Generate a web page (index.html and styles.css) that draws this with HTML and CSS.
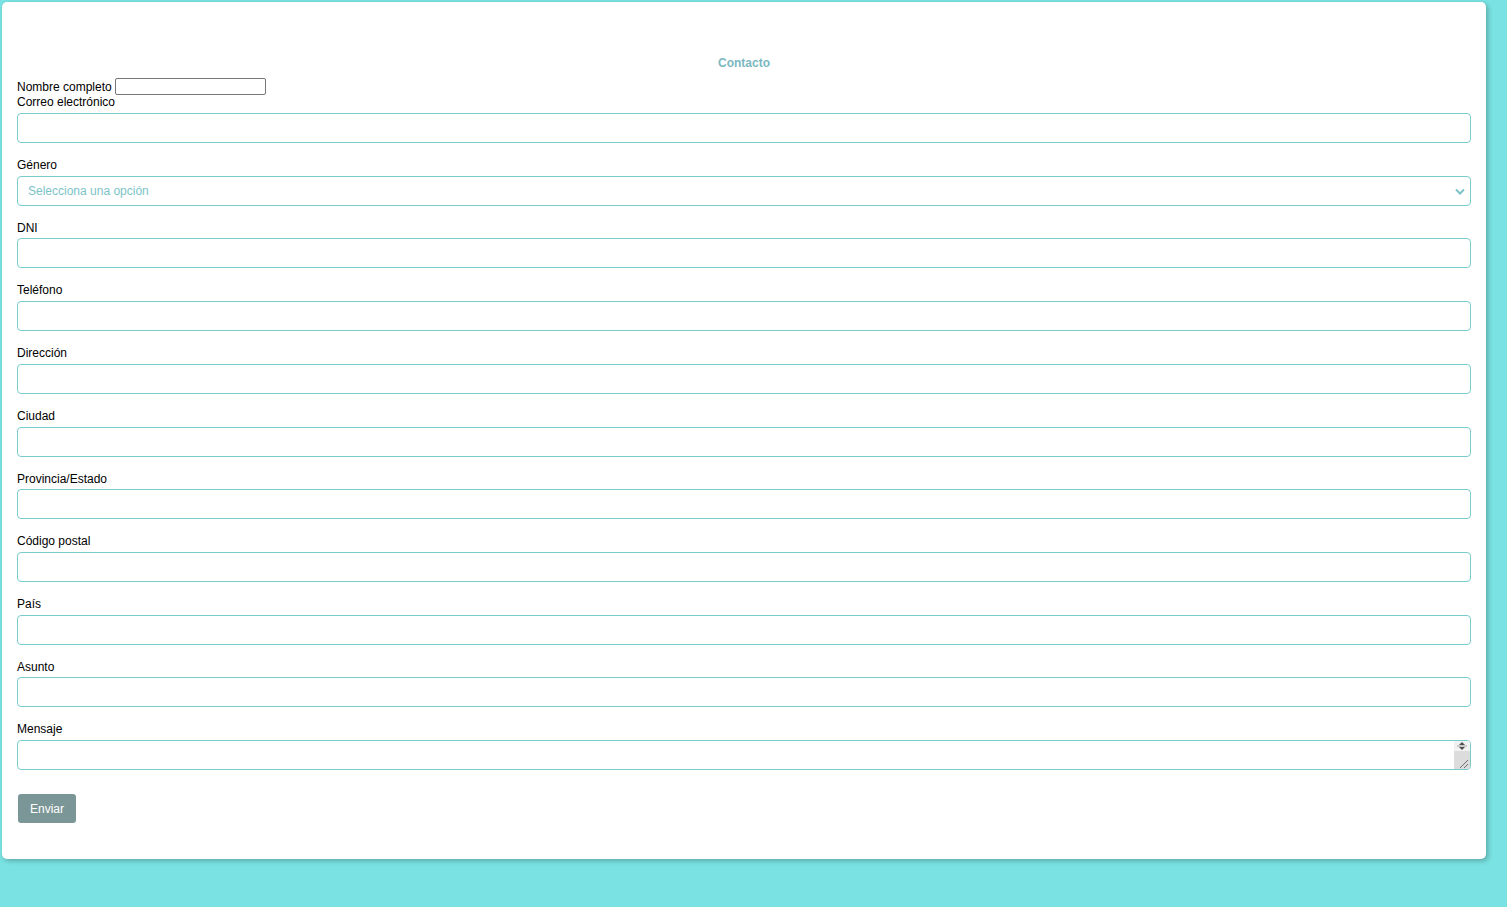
FILE: index.html
```html
<!DOCTYPE html>
<html lang="es">
<head>
<meta charset="utf-8">
<title>Contacto</title>
<link rel="stylesheet" href="styles.css">
</head>
<body>
<div class="card">
  <h2 class="title">Contacto</h2>
  <form class="form">
    <div class="inline-row">
      <label class="label-inline" for="nombre">Nombre completo</label>
      <input class="plain-input" id="nombre" type="text">
    </div>
    <label class="label first" for="correo">Correo electrónico</label>
    <input class="field" id="correo" type="email">

    <label class="label" for="genero">Género</label>
    <div class="select-wrap">
      <select class="field select" id="genero">
        <option>Selecciona una opción</option>
      </select>
      <svg class="chevron" width="10" height="7" viewBox="0 0 10 7"><path d="M1 1.5 L5 5.5 L9 1.5" fill="none" stroke="#7cc3c8" stroke-width="2"/></svg>
    </div>

    <label class="label" for="dni">DNI</label>
    <input class="field" id="dni" type="text">

    <label class="label" for="tel">Teléfono</label>
    <input class="field" id="tel" type="tel">

    <label class="label" for="dir">Dirección</label>
    <input class="field" id="dir" type="text">

    <label class="label" for="ciudad">Ciudad</label>
    <input class="field" id="ciudad" type="text">

    <label class="label" for="prov">Provincia/Estado</label>
    <input class="field" id="prov" type="text">

    <label class="label" for="cp">Código postal</label>
    <input class="field" id="cp" type="text">

    <label class="label" for="pais">País</label>
    <input class="field" id="pais" type="text">

    <label class="label" for="asunto">Asunto</label>
    <input class="field" id="asunto" type="text">

    <label class="label" for="msg">Mensaje</label>
    <div class="textarea-wrap">
      <textarea class="field textarea" id="msg"></textarea>
      <div class="scrollbar">
        <div class="scroll-arrows">
          <svg width="16" height="10" viewBox="0 0 16 10"><path d="M8 1 L11 4 L5 4 Z" fill="#505050"/><path d="M3 5 H13" stroke="#a0a0a0" stroke-width="1"/><path d="M8 9 L11 6 L5 6 Z" fill="#505050"/></svg>
        </div>
        <div class="scroll-grip">
          <svg width="16" height="18" viewBox="0 0 16 18"><path d="M14 9 L6 17 M14 13 L10 17" stroke="#6e6e6e" stroke-width="1"/></svg>
        </div>
      </div>
    </div>

    <button class="submit" type="button">Enviar</button>
  </form>
</div>
</body>
</html>
```

FILE: styles.css
```css
html, body {
  margin: 0;
  padding: 0;
}
body {
  background: #7ae2e2;
  font-family: "Liberation Sans", Arial, sans-serif;
  font-size: 12px;
  color: #000;
  min-height: 907px;
  padding-top: 2px;
  box-sizing: border-box;
}
.card {
  margin: 0 21px 0 2px;
  background: #fff;
  border-radius: 5px;
  box-shadow: 2px 2px 5px rgba(0, 0, 0, 0.25);
  padding: 54px 15px 36px 15px;
}
.title {
  margin: 0 0 7px 0;
  text-align: center;
  font-size: 12px;
  font-weight: bold;
  color: #7bb8c0;
  line-height: 15px;
}
.form {
  display: flex;
  flex-direction: column;
  align-items: flex-start;
}
.inline-row {
  display: flex;
  align-items: center;
  height: 17px;
}
.label-inline {
  line-height: 14px;
  margin-right: 3px;
  padding-top: 1px;
}
.plain-input {
  box-sizing: border-box;
  width: 151px;
  height: 17px;
  border: 1px solid #767676;
  border-radius: 2px;
  padding: 0 2px;
  font: inherit;
  margin: 0;
}
.label {
  display: block;
  line-height: 13.7px;
  padding-top: 1px;
  margin-bottom: 3px;
}
.label.first {
  line-height: 14px;
  padding-top: 0;
  margin-bottom: 4px;
}
.field {
  box-sizing: border-box;
  width: 100%;
  height: 30px;
  border: 1px solid #7acccc;
  border-radius: 4px;
  padding: 0 10px;
  font: inherit;
  margin: 0 0 15px 0;
  background: #fff;
  color: #000;
}
.select-wrap {
  position: relative;
  width: 100%;
}
.select {
  appearance: none;
  -webkit-appearance: none;
  color: #7cc3c8;
  padding-left: 10px;
}
.chevron {
  position: absolute;
  right: 6px;
  top: 12px;
  pointer-events: none;
}
.textarea-wrap {
  position: relative;
  width: 100%;
  margin-bottom: 24px;
}
.textarea {
  display: block;
  resize: vertical;
  padding: 4px 10px;
  margin: 0;
}
.scrollbar {
  position: absolute;
  top: 1px;
  right: 1px;
  bottom: 1px;
  width: 16px;
  display: flex;
  flex-direction: column;
  border-radius: 0 3px 3px 0;
  overflow: hidden;
}
.scroll-arrows {
  height: 10px;
  background: #f1f1f1;
  display: flex;
}
.scroll-grip {
  flex: 1;
  background: #dcdcdc;
  display: flex;
}
.submit {
  margin-left: 1px;
  width: 58px;
  height: 29px;
  border: none;
  border-radius: 3px;
  background: #7b9696;
  color: #fff;
  font-family: "Liberation Sans", Arial, sans-serif;
  font-size: 12px;
  padding: 0;
  cursor: pointer;
}
```
